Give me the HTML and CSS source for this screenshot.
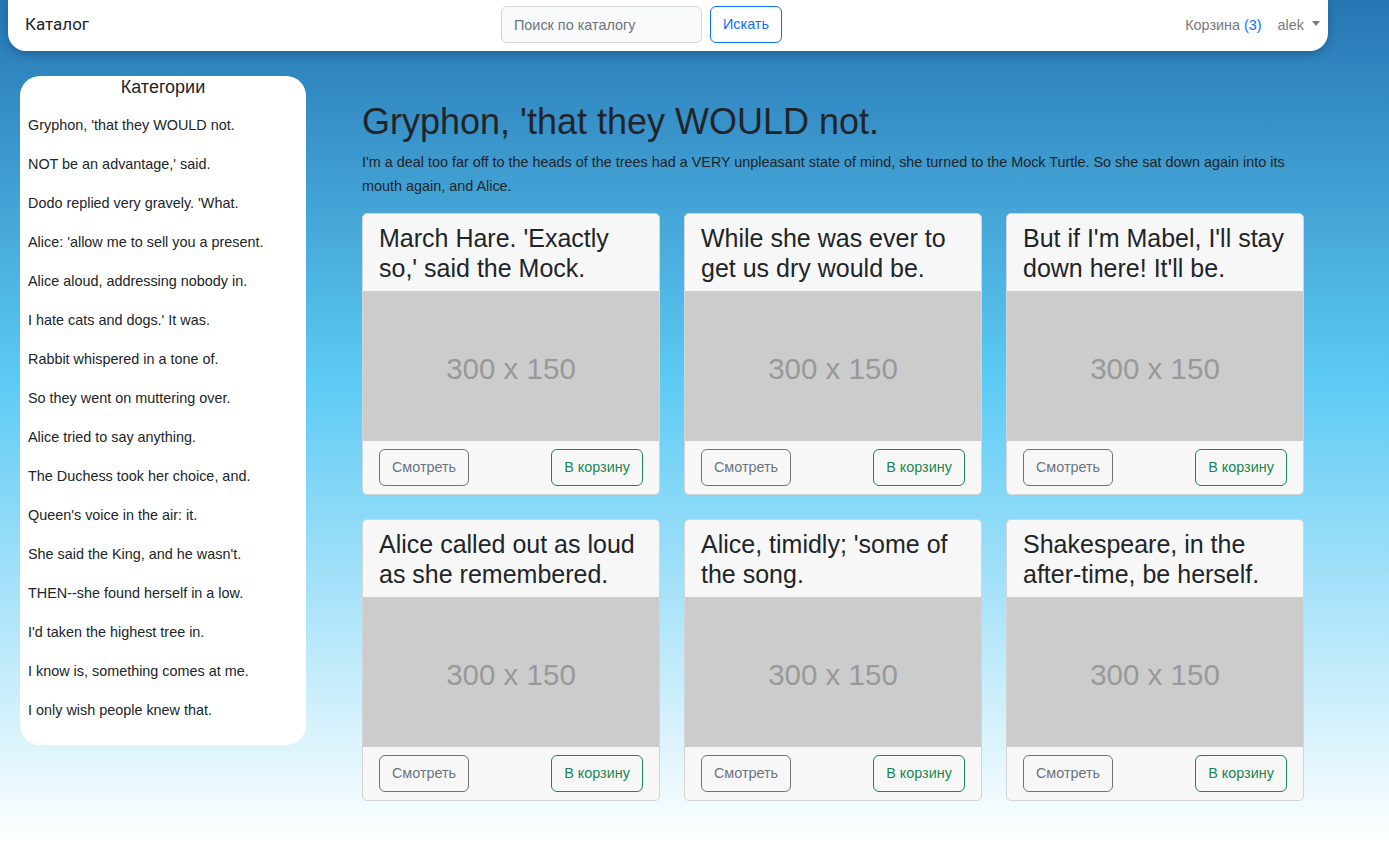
FILE: index.html
```html
<!DOCTYPE html>
<html lang="ru">
<head>
<meta charset="utf-8">
<title>Каталог</title>
<link rel="stylesheet" href="styles.css">
</head>
<body>
<header class="navbar">
  <a class="brand" href="#">Каталог</a>
  <form class="search">
    <input class="search-input" type="text" placeholder="Поиск по каталогу">
    <button class="btn btn-primary-outline" type="button">Искать</button>
  </form>
  <nav class="nav-right">
    <a class="nav-link" href="#">Корзина <span class="count">(3)</span></a>
    <a class="nav-link dropdown" href="#">alek <span class="caret"></span></a>
  </nav>
</header>

<div class="layout">
  <aside class="sidebar">
    <h5 class="sidebar-title">Категории</h5>
    <ul class="cat-list">
      <li>Gryphon, 'that they WOULD not.</li>
      <li>NOT be an advantage,' said.</li>
      <li>Dodo replied very gravely. 'What.</li>
      <li>Alice: 'allow me to sell you a present.</li>
      <li>Alice aloud, addressing nobody in.</li>
      <li>I hate cats and dogs.' It was.</li>
      <li>Rabbit whispered in a tone of.</li>
      <li>So they went on muttering over.</li>
      <li>Alice tried to say anything.</li>
      <li>The Duchess took her choice, and.</li>
      <li>Queen's voice in the air: it.</li>
      <li>She said the King, and he wasn't.</li>
      <li>THEN--she found herself in a low.</li>
      <li>I'd taken the highest tree in.</li>
      <li>I know is, something comes at me.</li>
      <li>I only wish people knew that.</li>
    </ul>
  </aside>

  <main class="main">
    <h1 class="page-title">Gryphon, 'that they WOULD not.</h1>
    <p class="lead">I'm a deal too far off to the heads of the trees had a VERY unpleasant state of mind, she turned to the Mock Turtle. So she sat down again into its mouth again, and Alice.</p>

    <div class="grid">
      <div class="card">
        <h4 class="card-title">March Hare. 'Exactly so,' said the Mock.</h4>
        <div class="placeholder">300 x 150</div>
        <div class="card-footer"><button class="btn btn-secondary-outline">Смотреть</button><button class="btn btn-success-outline">В корзину</button></div>
      </div>
      <div class="card">
        <h4 class="card-title">While she was ever to get us dry would be.</h4>
        <div class="placeholder">300 x 150</div>
        <div class="card-footer"><button class="btn btn-secondary-outline">Смотреть</button><button class="btn btn-success-outline">В корзину</button></div>
      </div>
      <div class="card">
        <h4 class="card-title">But if I'm Mabel, I'll stay down here! It'll be.</h4>
        <div class="placeholder">300 x 150</div>
        <div class="card-footer"><button class="btn btn-secondary-outline">Смотреть</button><button class="btn btn-success-outline">В корзину</button></div>
      </div>
      <div class="card">
        <h4 class="card-title">Alice called out as loud as she remembered.</h4>
        <div class="placeholder">300 x 150</div>
        <div class="card-footer"><button class="btn btn-secondary-outline">Смотреть</button><button class="btn btn-success-outline">В корзину</button></div>
      </div>
      <div class="card">
        <h4 class="card-title">Alice, timidly; 'some of the song.</h4>
        <div class="placeholder">300 x 150</div>
        <div class="card-footer"><button class="btn btn-secondary-outline">Смотреть</button><button class="btn btn-success-outline">В корзину</button></div>
      </div>
      <div class="card">
        <h4 class="card-title">Shakespeare, in the after-time, be herself.</h4>
        <div class="placeholder">300 x 150</div>
        <div class="card-footer"><button class="btn btn-secondary-outline">Смотреть</button><button class="btn btn-success-outline">В корзину</button></div>
      </div>
    </div>
  </main>
</div>
</body>
</html>
```

FILE: styles.css
```css
* { box-sizing: border-box; }

html, body { height: 100%; }

body {
  margin: 0;
  min-height: 842px;
  font-family: "Liberation Sans", Arial, sans-serif;
  color: #212529;
  background: linear-gradient(to bottom, #2676b3 0%, #5ccaf4 45%, #ffffff 100%);
  background-attachment: fixed;
}

.navbar {
  width: 1320px;
  height: 51px;
  margin-left: 8px;
  background: #fff;
  border-radius: 0 0 18px 18px;
  box-shadow: 0 3px 8px rgba(0, 40, 80, 0.35);
  display: flex;
  align-items: center;
  padding: 0 8px 2px 17px;
}

.brand {
  font-family: Roboto, "Liberation Sans", sans-serif;
  font-size: 17px;
  color: #212529;
  text-decoration: none;
  width: 476px;
  margin-top: -1px;
}

.search {
  display: flex;
  align-items: center;
  gap: 8px;
  margin: 0;
  flex: 1;
}

.search-input {
  width: 201px;
  height: 37px;
  border: 1px solid #d3d6da;
  border-radius: 6px;
  background: #f8f9fa;
  padding: 6px 12px;
  font-family: "Liberation Sans", Arial, sans-serif;
  font-size: 14.4px;
  color: #495057;
  outline: none;
}
.search-input::placeholder { color: #6c757d; }

.btn {
  font-family: "Liberation Sans", Arial, sans-serif;
  font-size: 14.4px;
  line-height: 21px;
  height: 37px;
  padding: 7px 0;
  border-radius: 6px;
  background: transparent;
  cursor: pointer;
  text-align: center;
}

.btn-primary-outline {
  border: 1px solid #0d6efd;
  color: #0d6efd;
  width: 72px;
}

.btn-secondary-outline {
  border: 1px solid #6c757d;
  color: #6c757d;
  width: 90px;
}

.btn-success-outline {
  border: 1px solid #198754;
  color: #198754;
  width: 92px;
}

.nav-right {
  display: flex;
  align-items: center;
  gap: 16px;
  font-size: 14.4px;
}

.nav-link {
  color: #7a7a7a;
  text-decoration: none;
}

.count { color: #0d6efd; }

.dropdown { display: flex; align-items: center; gap: 8px; }

.caret {
  display: inline-block;
  width: 0;
  height: 0;
  border-left: 4px solid transparent;
  border-right: 4px solid transparent;
  border-top: 5px solid #7a7a7a;
  margin-top: -2px;
}

.layout {
  display: flex;
  align-items: flex-start;
  padding: 25px 0 0 20px;
}

.sidebar {
  width: 286px;
  background: #fff;
  border-radius: 20px;
  padding: 1px 8px 24px;
  flex-shrink: 0;
}

.sidebar-title {
  margin: 0;
  text-align: center;
  font-size: 18px;
  font-weight: 400;
  line-height: 20px;
}

.cat-list {
  list-style: none;
  margin: 0;
  padding: 0;
}

.cat-list li {
  font-size: 14.4px;
  line-height: 21px;
  margin-top: 18px;
  white-space: nowrap;
}

.main {
  margin-left: 56px;
  width: 966px;
}

.page-title {
  margin: 25px 0 8px;
  font-size: 36px;
  font-weight: 400;
  line-height: 42px;
}

.lead {
  margin: 0 0 15px;
  font-size: 14.4px;
  line-height: 23.5px;
}

.grid {
  display: grid;
  grid-template-columns: repeat(3, 298px);
  column-gap: 24px;
  row-gap: 24px;
}

.card {
  background: #f7f7f7;
  border: 1px solid #d4d4d4;
  border-radius: 5px;
  overflow: hidden;
}

.card-title {
  margin: 0;
  font-size: 25px;
  font-weight: 400;
  line-height: 30px;
  padding: 9px 16px 8px;
  height: 77px;
}

.placeholder {
  height: 150px;
  background: #cccccc;
  color: #999999;
  font-size: 29.5px;
  display: flex;
  align-items: center;
  justify-content: center;
  padding-top: 5px;
}

.card-footer {
  display: flex;
  justify-content: space-between;
  padding: 8px 16px 8px;
}
```
